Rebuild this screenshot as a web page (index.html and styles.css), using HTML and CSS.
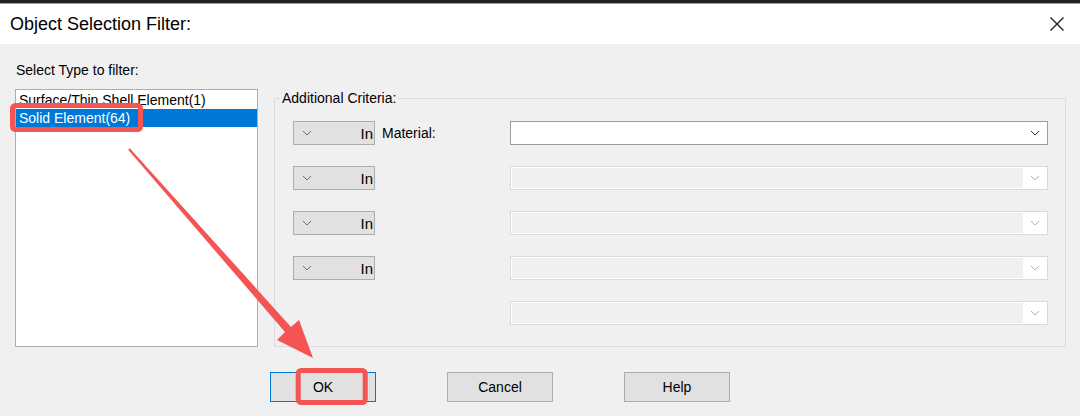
FILE: index.html
```html
<!DOCTYPE html>
<html lang="en">
  <head>
    <meta charset="UTF-8" />
    <meta name="viewport" content="width=device-width, initial-scale=1.0" />
    <title>Object Selection Filter</title>
    <link rel="stylesheet" href="styles.css">
  </head>
  <body>
    <div class="topline"></div>
    <header class="titlebar">
      <span class="title">Object Selection Filter:</span>
      <svg class="close" width="16" height="16" viewBox="0 0 16 16">
        <path d="M1.5 1.5 L14.5 14.5 M14.5 1.5 L1.5 14.5" stroke="#1a1a1a" stroke-width="1.3" fill="none" />
      </svg>
    </header>

    <main class="dialog">
      <div class="panes">
        <section class="type-pane">
          <div class="caption">Select Type to filter:</div>
          <ul class="type-list">
            <li>Surface/Thin Shell Element(1)</li>
            <li class="selected">Solid Element(64)</li>
          </ul>
        </section>

        <fieldset class="criteria">
          <legend>Additional Criteria:</legend>
          <div class="criteria-grid">
            <div class="pick">
              <svg class="chev" width="10" height="6" viewBox="0 0 10 6"><polyline points="1,1 5,5 9,1" /></svg>
              <span>In</span>
            </div>
            <label class="field-label">Material:</label>
            <div class="combo">
              <span class="combo-btn"><svg class="chev dark" width="10" height="6" viewBox="0 0 10 6"><polyline points="1,1 5,5 9,1" /></svg></span>
            </div>

            <div class="pick">
              <svg class="chev" width="10" height="6" viewBox="0 0 10 6"><polyline points="1,1 5,5 9,1" /></svg>
              <span>In</span>
            </div>
            <span></span>
            <div class="combo off">
              <span class="combo-btn"><svg class="chev light" width="10" height="6" viewBox="0 0 10 6"><polyline points="1,1 5,5 9,1" /></svg></span>
            </div>

            <div class="pick">
              <svg class="chev" width="10" height="6" viewBox="0 0 10 6"><polyline points="1,1 5,5 9,1" /></svg>
              <span>In</span>
            </div>
            <span></span>
            <div class="combo off">
              <span class="combo-btn"><svg class="chev light" width="10" height="6" viewBox="0 0 10 6"><polyline points="1,1 5,5 9,1" /></svg></span>
            </div>

            <div class="pick">
              <svg class="chev" width="10" height="6" viewBox="0 0 10 6"><polyline points="1,1 5,5 9,1" /></svg>
              <span>In</span>
            </div>
            <span></span>
            <div class="combo off">
              <span class="combo-btn"><svg class="chev light" width="10" height="6" viewBox="0 0 10 6"><polyline points="1,1 5,5 9,1" /></svg></span>
            </div>

            <div class="combo off last">
              <span class="combo-btn"><svg class="chev light" width="10" height="6" viewBox="0 0 10 6"><polyline points="1,1 5,5 9,1" /></svg></span>
            </div>
          </div>
        </fieldset>
      </div>

      <div class="buttons">
        <button class="ok">OK</button>
        <button>Cancel</button>
        <button>Help</button>
      </div>
    </main>

    <!-- red call-outs drawn over the dialog -->
    <svg class="marks" width="1080" height="416" viewBox="0 0 1080 416">
      <rect x="12.5" y="105.5" width="128" height="24" rx="3" />
      <rect x="298.2" y="370.5" width="67" height="32" rx="3" />
      <polygon class="arrow" points="128.2,149.7 129.8,148.3 291,326.9 299,320 313,358 277,340 285,332.1" />
    </svg>
  </body>
</html>
```

FILE: styles.css
```css
/* General styles */
body {
  margin: 0;
  width: 1080px;
  height: 416px;
  overflow: hidden;
  position: relative;
  background-color: #f0f0f0;
  font-family: "Liberation Sans", Arial, sans-serif;
  color: #000;
}

.topline {
  height: 3px;
  background-color: #202328;
  border-bottom: 1px solid #a0a0a0;
}

.titlebar {
  height: 40px;
  display: flex;
  align-items: center;
  justify-content: space-between;
  padding: 0 15px 0 10px;
  background-color: #fff;
}

.title {
  font-size: 18px;
}

.close {
  display: block;
}

/* Dialog body */
.dialog {
  padding: 18px 14px 0 15px;
}

.panes {
  display: flex;
  gap: 16px;
}

.type-pane {
  width: 243px;
  flex: none;
}

.caption {
  font-size: 14px;
  line-height: 16px;
  padding-left: 1px;
  margin-bottom: 11px;
}

.type-list {
  list-style: none;
  margin: 0;
  padding: 1px 0 0;
  height: 258px;
  box-sizing: border-box;
  border: 1px solid #adadad;
  background-color: #fff;
}

.type-list li {
  font-size: 14px;
  line-height: 18px;
  padding-left: 3px;
  white-space: nowrap;
}

.type-list li.selected {
  background-color: #0078d7;
  color: #fff;
}

/* Additional criteria group */
.criteria {
  flex: 1;
  min-width: 0;
  margin: 28px 0 0;
  padding: 0 17px 0 5px;
  border: 1px solid #dcdcdc;
}

.criteria legend {
  font-size: 14px;
  line-height: 16px;
  padding: 0 2px;
}

.criteria-grid {
  display: grid;
  grid-template-columns: 82px 135px 1fr;
  align-items: center;
  row-gap: 21px;
  padding-top: 15px;
  margin-left: 13px;
}

.pick {
  height: 24px;
  box-sizing: border-box;
  display: flex;
  align-items: center;
  justify-content: space-between;
  padding: 0 1px 0 8px;
  background-color: #e1e1e1;
  border: 1px solid #adadad;
  font-size: 15px;
}

.field-label {
  font-size: 14px;
  padding-left: 7px;
}

.combo {
  height: 24px;
  box-sizing: border-box;
  display: flex;
  justify-content: flex-end;
  background-color: #fff;
  border: 1px solid #9c9c9c;
}

.combo.off {
  background-color: #f0f0f0;
  border-color: #dadada;
  box-shadow: inset 0 0 0 1px #fff;
}

.combo.last {
  grid-column: 3;
}

.combo-btn {
  width: 24px;
  display: flex;
  align-items: center;
  justify-content: center;
  background-color: #fff;
}

.chev {
  display: block;
}

.chev polyline {
  fill: none;
  stroke: #707070;
  stroke-width: 1;
}

.chev.dark polyline {
  stroke: #333;
}

.chev.light polyline {
  stroke: #b4b4b4;
}

/* Buttons */
.buttons {
  display: flex;
  gap: 71px;
  margin-top: 25px;
  padding-left: 255px;
}

.buttons button {
  width: 106px;
  height: 30px;
  padding: 0;
  font-family: "Liberation Sans", Arial, sans-serif;
  font-size: 14px;
  color: #000;
  background-color: #e1e1e1;
  border: 1px solid #adadad;
}

.buttons button.ok {
  border-color: #0078d7;
}

/* Red call-outs */
.marks {
  position: absolute;
  top: 0;
  left: 0;
  pointer-events: none;
}

.marks rect {
  fill: none;
  stroke: #f45454;
  stroke-width: 5;
}

.marks .arrow {
  fill: #f45454;
}
```
